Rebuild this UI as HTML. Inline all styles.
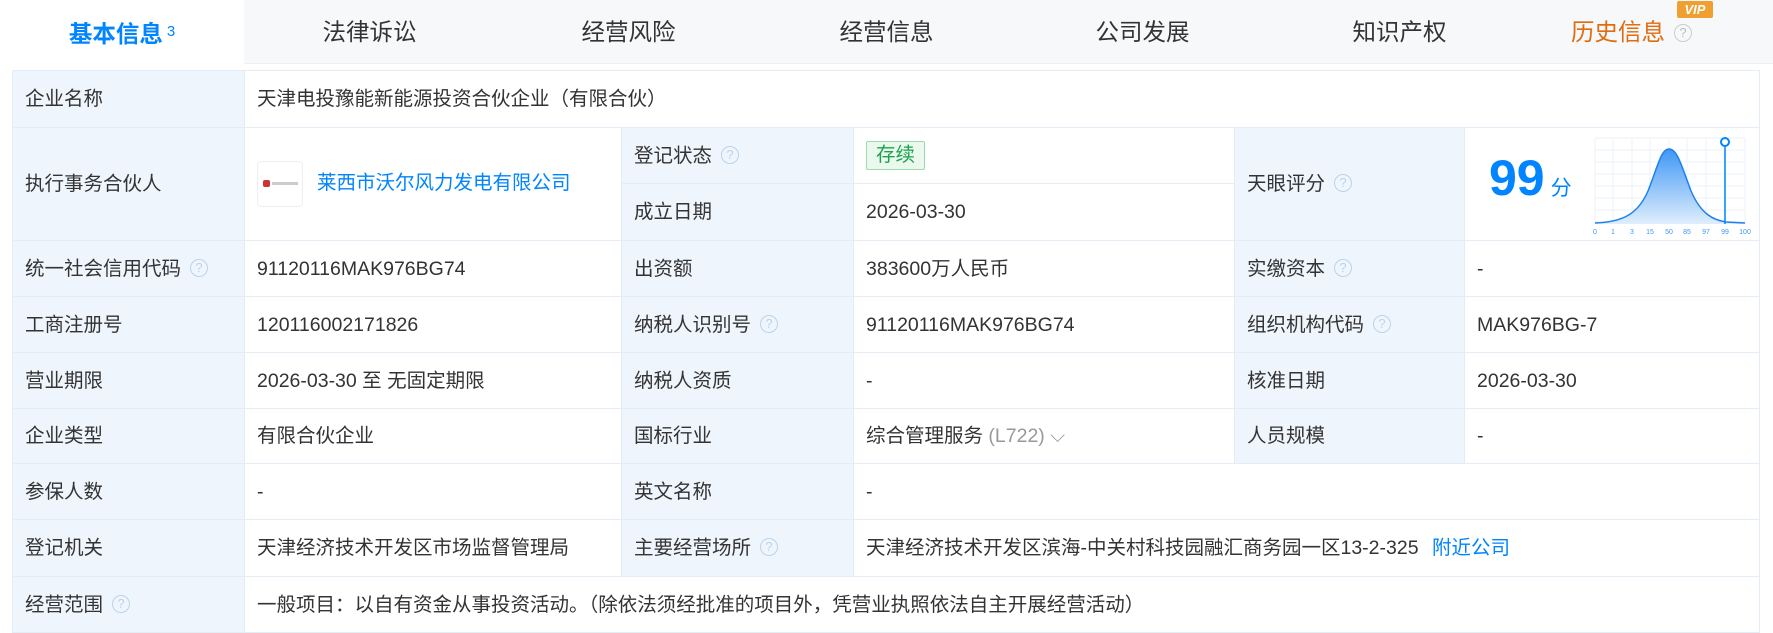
<!DOCTYPE html>
<html><head><meta charset="utf-8"><style>
*{margin:0;padding:0;box-sizing:border-box}
body{width:1773px;height:628px;overflow:hidden;background:#fff;font-family:"Liberation Sans","Noto Sans CJK SC",sans-serif;color:#333}
.tabs{position:absolute;left:0;top:0;width:1773px;height:64px;background:#f7f8fa;border-bottom:1px solid #f0f0f0}
.tab{position:absolute;top:0;width:253px;height:64px;line-height:64px;text-align:center;font-size:23.5px;color:#333}
.tab.act{background:#fff;color:#0084ff;font-weight:bold}
.tab.act sup{font-size:15px;font-weight:normal;vertical-align:6px;margin-left:4px}
.vip{position:absolute;top:1px;left:1677px;width:36px;height:17px;background:#f0a030;color:#fff;font-size:13px;font-weight:bold;font-style:italic;line-height:17px;text-align:center;border-radius:2px}
.q{display:inline-block;width:18px;height:18px;border:1.5px solid #bcd3ea;border-radius:50%;color:#bcd3ea;font-size:13px;line-height:15px;text-align:center;vertical-align:3px;margin-left:9px;font-weight:normal}
.tab .q{vertical-align:3px}
table{position:absolute;left:12px;top:70px;border-collapse:collapse;table-layout:fixed;width:1747px}
td{border:1px solid #e4edf6;font-size:19.5px;line-height:24px;padding-left:12px;color:#333;vertical-align:middle;white-space:nowrap}
td.l{background:#eef5fc}
a{color:#0084ff;text-decoration:none}
.tag{display:inline-block;border:1px solid #9bd9ae;background:#eaf8ee;color:#1aa34a;padding:0 9px;height:29px;line-height:27px;border-radius:2px}
</style></head><body>
<div class="tabs">
<div class="tab act" style="left:0;width:244px">基本信息<sup>3</sup></div>
<div class="tab" style="left:243px">法律诉讼</div>
<div class="tab" style="left:502px">经营风险</div>
<div class="tab" style="left:760px">经营信息</div>
<div class="tab" style="left:1016px">公司发展</div>
<div class="tab" style="left:1273px">知识产权</div>
<div class="tab" style="left:1505px;color:#e06c10">历史信息<span class="q" style="border-color:#ccc;color:#bbb">?</span></div>
<div class="vip">VIP</div>
</div>
<table>
<colgroup><col style="width:232px"><col style="width:377px"><col style="width:232px"><col style="width:381px"><col style="width:230px"><col style="width:295px"></colgroup>
<tr style="height:57px"><td class="l">企业名称</td><td colspan="5">天津电投豫能新能源投资合伙企业（有限合伙）</td></tr>
<tr style="height:56px"><td class="l" rowspan="2">执行事务合伙人</td><td rowspan="2"><span style="display:inline-block;width:46px;height:46px;border:1px solid #eee;border-radius:4px;vertical-align:middle;margin-right:14px;position:relative"><span style="position:absolute;left:5px;top:18px;width:7px;height:7px;background:#c33;border-radius:2px"></span><span style="position:absolute;left:14px;top:20px;width:26px;height:3px;background:#ccc"></span></span><a>莱西市沃尔风力发电有限公司</a></td><td class="l">登记状态<span class="q">?</span></td><td><span class="tag">存续</span></td><td class="l" rowspan="2">天眼评分<span class="q">?</span></td><td rowspan="2" style="position:relative;padding:0">
<div style="position:absolute;left:24px;top:22px;font-size:50px;line-height:56px;font-weight:bold;color:#0084ff">99<span style="font-size:21px;font-weight:normal;margin-left:6px">分</span></div>
<svg style="position:absolute;left:128px;top:8px" width="160" height="100" viewBox="0 0 160 100">
<g stroke="#eef3f8" stroke-width="1">
<path d="M2 2H152M2 14H152M2 26H152M2 38H152M2 50H152M2 62H152M2 74H152M2 86H152M2 2V88M20 2V88M39 2V88M57 2V88M76 2V88M94 2V88M113 2V88M131 2V88M152 2V88"/></g>
<defs><linearGradient id="g" x1="0" y1="0" x2="0" y2="1"><stop offset="0" stop-color="#3f97f5"/><stop offset="1" stop-color="#e0eefd"/></linearGradient></defs>
<path d="M2 87C30 86 45 78 55 55C65 30 68 13 76 13C84 13 88 28 98 55C108 78 120 84 133 86L152 87V88H2Z" fill="url(#g)"/>
<path d="M2 87C30 86 45 78 55 55C65 30 68 13 76 13C84 13 88 28 98 55C108 78 120 84 133 86L152 87" fill="none" stroke="#1e80ef" stroke-width="1.5"/>
<line x1="132" y1="8" x2="132" y2="88" stroke="#0084ff" stroke-width="1.5"/>
<circle cx="132" cy="6" r="4" fill="#fff" stroke="#0084ff" stroke-width="2"/>
<g font-size="7" fill="#3f97f5" text-anchor="middle" font-family="Liberation Sans"><text x="2" y="98">0</text><text x="20" y="98">1</text><text x="39" y="98">3</text><text x="57" y="98">15</text><text x="76" y="98">50</text><text x="94" y="98">85</text><text x="113" y="98">97</text><text x="132" y="98">99</text><text x="152" y="98">100</text></g>
</svg></td></tr>
<tr style="height:57px"><td class="l">成立日期</td><td>2026-03-30</td></tr>
<tr style="height:56px"><td class="l">统一社会信用代码<span class="q">?</span></td><td>91120116MAK976BG74</td><td class="l">出资额</td><td>383600万人民币</td><td class="l">实缴资本<span class="q">?</span></td><td>-</td></tr>
<tr style="height:56px"><td class="l">工商注册号</td><td>120116002171826</td><td class="l">纳税人识别号<span class="q">?</span></td><td>91120116MAK976BG74</td><td class="l">组织机构代码<span class="q">?</span></td><td>MAK976BG-7</td></tr>
<tr style="height:56px"><td class="l">营业期限</td><td>2026-03-30 至 无固定期限</td><td class="l">纳税人资质</td><td>-</td><td class="l">核准日期</td><td>2026-03-30</td></tr>
<tr style="height:55px"><td class="l">企业类型</td><td>有限合伙企业</td><td class="l">国标行业</td><td>综合管理服务<span style="color:#999"> (L722) ⌵</span></td><td class="l">人员规模</td><td>-</td></tr>
<tr style="height:56px"><td class="l">参保人数</td><td>-</td><td class="l">英文名称</td><td colspan="3">-</td></tr>
<tr style="height:57px"><td class="l">登记机关</td><td>天津经济技术开发区市场监督管理局</td><td class="l">主要经营场所<span class="q">?</span></td><td colspan="3">天津经济技术开发区滨海-中关村科技园融汇商务园一区13-2-325 <a style="margin-left:8px">附近公司</a></td></tr>
<tr style="height:56px"><td class="l">经营范围<span class="q">?</span></td><td colspan="5">一般项目：以自有资金从事投资活动。（除依法须经批准的项目外，凭营业执照依法自主开展经营活动）</td></tr>
</table>
</body></html>
